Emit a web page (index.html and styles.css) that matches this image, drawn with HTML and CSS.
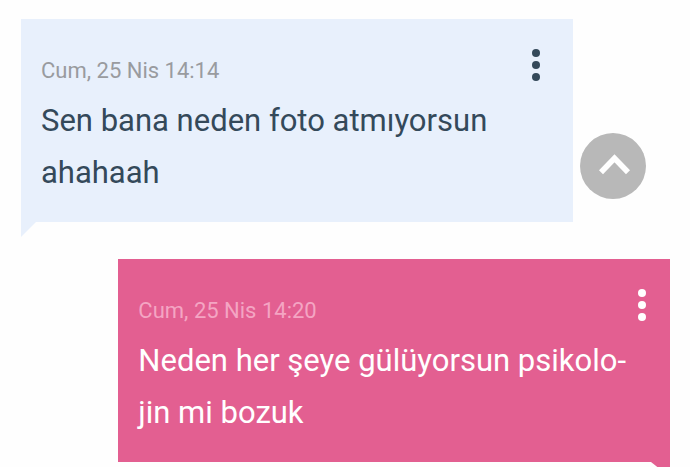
FILE: index.html
```html
<!DOCTYPE html>
<html lang="tr">
<head>
<meta charset="utf-8">
<meta name="viewport" content="width=device-width, initial-scale=1">
<title>Mesajlar</title>
<link rel="stylesheet" href="styles.css">
</head>
<body>
<main class="chat">
  <article class="bubble received">
    <header class="bubble-header">
      <time class="date">Cum, 25 Nis 14:14</time>
      <button class="menu" type="button" aria-label="Seçenekler">
        <svg width="8" height="32" viewBox="0 0 8 32" fill="currentColor" aria-hidden="true"><circle cx="4" cy="4" r="4"/><circle cx="4" cy="16" r="4"/><circle cx="4" cy="28" r="4"/></svg>
      </button>
    </header>
    <p class="message">Sen bana neden foto atmıyorsun ahahaah</p>
  </article>
  <article class="bubble sent">
    <header class="bubble-header">
      <time class="date">Cum, 25 Nis 14:20</time>
      <button class="menu" type="button" aria-label="Seçenekler">
        <svg width="8" height="32" viewBox="0 0 8 32" fill="currentColor" aria-hidden="true"><circle cx="4" cy="4" r="4"/><circle cx="4" cy="16" r="4"/><circle cx="4" cy="28" r="4"/></svg>
      </button>
    </header>
    <p class="message">Neden her şeye gülüyorsun psikolo-<br>jin mi bozuk</p>
  </article>
</main>
<button class="to-top" type="button" aria-label="Yukarı çık">
  <svg width="66" height="66" viewBox="0 0 66 66" fill="none" stroke="#fff" stroke-width="5.6" aria-hidden="true"><path d="M21 39.3 34.5 25.3 48 39.3"/></svg>
</button>
</body>
</html>
```
FILE: styles.css
```css
* {
  box-sizing: border-box;
}

body {
  margin: 0;
  background: #fefefe;
  font-family: Roboto, "Liberation Sans", sans-serif;
  overflow: hidden;
}

.chat {
  display: flex;
  flex-direction: column;
  gap: 37px;
  padding: 19px 20px 20px 21px;
}

.bubble {
  position: relative;
  width: 85%;
  padding: 39px 20px 23px;
}

.bubble::after {
  content: "";
  position: absolute;
  top: 100%;
}

.received {
  align-self: flex-start;
  background: #e8f0fc;
  color: #34495a;
}

.received::after {
  left: 0;
  width: 15px;
  height: 15px;
  background: #e8f0fc;
  clip-path: polygon(0 0, 100% 0, 0 100%);
}

.sent {
  align-self: flex-end;
  background: #e35f91;
  color: #fff;
}

.sent::after {
  right: 0;
  width: 19px;
  height: 15px;
  background: #e35f91;
  clip-path: polygon(0 0, 100% 0, 100% 100%);
}

.bubble-header {
  display: flex;
  justify-content: space-between;
  height: 26px;
  margin-bottom: 11px;
}

.date {
  font-size: 22px;
  line-height: 26px;
}

.received .date {
  color: #999b9f;
}

.sent .date {
  color: #f4a5c3;
}

.menu {
  display: flex;
  align-self: center;
  margin-bottom: 12px;
  padding: 0 4px;
  border: 0;
  background: none;
  color: inherit;
}

.received .menu {
  margin-right: 9px;
}

.message {
  margin: 0;
  font-size: 31px;
  line-height: 52px;
}

.to-top {
  position: fixed;
  top: 133px;
  right: 44px;
  width: 66px;
  height: 66px;
  padding: 0;
  border: 0;
  border-radius: 50%;
  background: #b8b8b8;
}

.to-top svg {
  display: block;
}
```
